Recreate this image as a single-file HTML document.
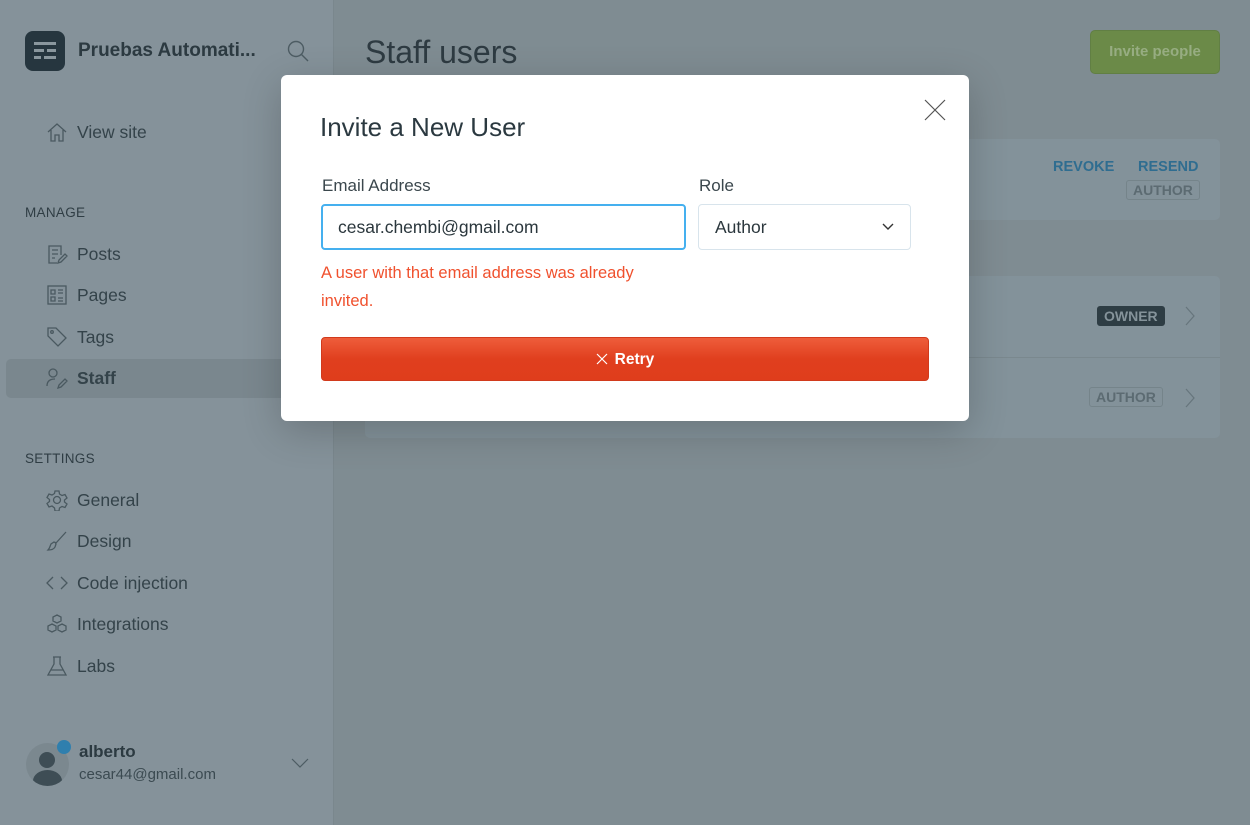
<!DOCTYPE html>
<html><head><style>
*{box-sizing:border-box;margin:0;padding:0}
body{width:1250px;height:825px;overflow:hidden;font-family:"Liberation Sans",sans-serif;background:#7f8c92;position:relative;color:#2c3a41}
.side{position:absolute;left:0;top:0;width:334px;height:825px;background:#85929a;border-right:1px solid #7a878d}
.logo{position:absolute;left:25px;top:31px;width:40px;height:40px;border-radius:8px;background:#26363f}
.logo i{position:absolute;height:3px;background:#8a979e}
.brand{position:absolute;left:78px;top:40px;font-size:19px;font-weight:bold;color:#2c3a41}
.item{position:absolute;left:46px;font-size:17.5px;color:#34434a;display:flex;align-items:center}
.item svg{width:22px;height:22px;margin-right:9px;stroke:#4a5960;fill:none;stroke-width:1.3}
.hd{position:absolute;left:25px;font-size:13.5px;color:#2f3d44;letter-spacing:.3px}
.main h1{position:absolute;left:365px;top:34px;font-size:32px;font-weight:normal;color:#2e3b42}
.btn{position:absolute;left:1090px;top:30px;width:130px;height:44px;border-radius:5px;background:#6b8a48;border:1px solid #617f44;color:#97ad82;font-weight:bold;font-size:15px;text-align:center;line-height:42px}
.card{position:absolute;left:365px;width:855px;background:#83929a;border-radius:5px}
.tag{position:absolute;font-size:14px;font-weight:bold;border:1px solid #75848a;border-radius:3px;padding:1px 6px;color:#5c6b72}
.modal{position:absolute;left:281px;top:75px;width:688px;height:346px;background:#fff;border-radius:6px;box-shadow:0 10px 40px rgba(0,0,0,.2)}
.modal h2{position:absolute;left:39px;top:37px;font-size:26px;font-weight:normal;color:#2b3940}
.lbl{position:absolute;font-size:17px;color:#3b474d;top:101px}
.inp{position:absolute;top:129px;height:46px;border-radius:4px;font-size:17.5px;padding-left:16px;line-height:44px;color:#2b373d}
.err{position:absolute;left:40px;top:184px;font-size:16.5px;line-height:28px;color:#f0512e}
.retry{position:absolute;left:40px;top:262px;width:608px;height:44px;border-radius:4px;background:linear-gradient(#ee5d3b,#e03f1e 50%,#df3d1c);color:#fff;font-weight:bold;font-size:15.5px;text-align:center;line-height:44px;border:1px solid #d13a1c}
</style></head><body>
<div class="side">
 <div class="logo"><i style="left:9px;top:11px;width:22px"></i><i style="left:9px;top:18px;width:10px"></i><i style="left:22px;top:18px;width:9px"></i><i style="left:9px;top:25px;width:7px"></i><i style="left:19px;top:25px;width:12px"></i></div>
 <div class="brand">Pruebas Automati...</div>
 <svg style="position:absolute;left:287px;top:40px" width="22" height="22" fill="none" stroke="#4d5c63" stroke-width="1.4"><circle cx="9" cy="9" r="7.5"/><path d="M14.5 14.5L21 21"/></svg>
 <div class="item" style="top:121px"><svg viewBox="0 0 22 22"><path d="M2 11L11 3l9 8M5 9v11h4v-6h4v6h4V9"/></svg>View site</div>
 <div class="hd" style="top:205px">MANAGE</div>
 <div class="item" style="top:243px"><svg viewBox="0 0 22 22"><path d="M15 12V3H3v17h8M6 7h6M6 11h6M6 15h3M12 20l1-3 6-6 2 2-6 6z"/></svg>Posts</div>
 <div class="item" style="top:284px"><svg viewBox="0 0 22 22"><rect x="2" y="2" width="18" height="18"/><path d="M5 6h4v4H5zM5 13h4v4H5zM12 6h5M12 9h5M12 14h5M12 17h5"/></svg>Pages</div>
 <div class="item" style="top:326px"><svg viewBox="0 0 22 22"><path d="M2 2h8l10 10-8 8L2 10z"/><circle cx="6" cy="6" r="1.3"/></svg>Tags</div>
 <div style="position:absolute;left:6px;top:359px;width:328px;height:39px;background:#7a878e;border-radius:5px"></div>
 <div class="item" style="top:367px;font-weight:bold"><svg viewBox="0 0 22 22"><circle cx="7" cy="6" r="4"/><path d="M1 19c0-5 3-7 8-7M12 21l1-3 6-6 2 2-6 6z"/></svg>Staff</div>
 <div class="hd" style="top:451px">SETTINGS</div>
 <div class="item" style="top:489px"><svg viewBox="0 0 22 22"><circle cx="11" cy="11" r="3.5"/><path d="M9 2h4l.5 3 2.5 1.5 3-1 2 3.5-2.5 2v2l2.5 2-2 3.5-3-1-2.5 1.5-.5 3H9l-.5-3L6 17l-3 1-2-3.5 2.5-2v-2L1 8.5 3 5l3 1 2.5-1.5z"/></svg>General</div>
 <div class="item" style="top:530px"><svg viewBox="0 0 22 22"><path d="M20 2L10 13l-2-1-3 2c-1 2-1 4-3 6 4 0 6-1 7-3l1-3-1-2"/></svg>Design</div>
 <div class="item" style="top:572px"><svg viewBox="0 0 22 22"><path d="M7 5l-6 6 6 6M15 5l6 6-6 6"/></svg>Code injection</div>
 <div class="item" style="top:613px"><svg viewBox="0 0 22 22"><path d="M11 2l4 2v4l-4 2-4-2V4zM6 11l4 2v4l-4 2-4-2v-4zM16 11l4 2v4l-4 2-4-2v-4z"/></svg>Integrations</div>
 <div class="item" style="top:655px"><svg viewBox="0 0 22 22"><path d="M7 2h8M8 2v7L2 20h18L14 9V2M5 15h12"/></svg>Labs</div>
 <div style="position:absolute;left:26px;top:743px;width:43px;height:43px;border-radius:50%;background:#7b888f;overflow:hidden">
  <div style="position:absolute;left:13px;top:9px;width:16px;height:16px;border-radius:50%;background:#3e4d55"></div>
  <div style="position:absolute;left:7px;top:27px;width:29px;height:22px;border-radius:50%;background:#3e4d55"></div></div>
 <div style="position:absolute;left:57px;top:740px;width:14px;height:14px;border-radius:50%;background:#2f7fae"></div>
 <div style="position:absolute;left:79px;top:742px;font-size:17px;font-weight:bold">alberto</div>
 <div style="position:absolute;left:79px;top:766px;font-size:15px;color:#3b4a51">cesar44@gmail.com</div>
 <svg style="position:absolute;left:291px;top:757px" width="18" height="12" fill="none" stroke="#4d5c63" stroke-width="1.2"><path d="M1 2l8 8 8-8"/></svg>
</div>
<div class="main">
 <h1>Staff users</h1>
 <div class="btn">Invite people</div>
 <div class="card" style="top:139px;height:81px">
  <div style="position:absolute;left:688px;top:20px;font-size:14.5px;font-weight:bold;color:#2f6d90">REVOKE</div>
  <div style="position:absolute;left:773px;top:20px;font-size:14.5px;font-weight:bold;color:#2f6d90">RESEND</div>
  <div class="tag" style="left:761px;top:41px">AUTHOR</div>
 </div>
 <div class="card" style="top:276px;height:162px">
  <div style="position:absolute;left:0;top:81px;width:855px;height:1px;background:#7a888e"></div>
  <div class="tag" style="left:732px;top:30px;background:#2e3d44;border-color:#2e3d44;color:#85939a">OWNER</div>
  <div class="tag" style="left:724px;top:111px">AUTHOR</div>
  <svg style="position:absolute;left:819px;top:30px" width="12" height="20" fill="none" stroke="#66757c" stroke-width="1.2"><path d="M2 1l8 9-8 9"/></svg>
  <svg style="position:absolute;left:819px;top:112px" width="12" height="20" fill="none" stroke="#66757c" stroke-width="1.2"><path d="M2 1l8 9-8 9"/></svg>
 </div>
</div>
<div class="modal">
 <svg style="position:absolute;left:643px;top:24px" width="22" height="22" fill="none" stroke="#555" stroke-width="1.2"><path d="M1 1l20 20M21 1L1 21"/></svg>
 <h2>Invite a New User</h2>
 <div class="lbl" style="left:41px">Email Address</div>
 <div class="lbl" style="left:418px">Role</div>
 <div class="inp" style="left:40px;width:365px;border:2px solid #45b0ef;padding-left:15px;line-height:42px">cesar.chembi@gmail.com</div>
 <div class="inp" style="left:417px;width:213px;border:1px solid #d8e4ec">Author
  <svg style="position:absolute;right:16px;top:18px" width="12" height="8" fill="none" stroke="#333" stroke-width="1.4"><path d="M1 1l5 5 5-5"/></svg></div>
 <div class="err">A user with that email address was already<br>invited.</div>
 <div class="retry"><svg width="12" height="12" style="margin-right:7px;vertical-align:-1px" fill="none" stroke="#fff" stroke-width="1.2"><path d="M1 1l10 10M11 1L1 11"/></svg>Retry</div>
</div>
</body></html>
